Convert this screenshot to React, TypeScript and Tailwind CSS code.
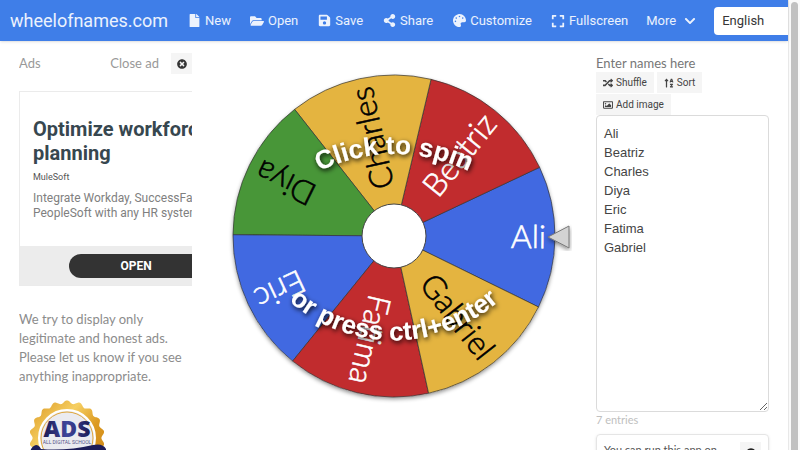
import type { ReactNode } from "react";
import {
  FaChevronDown,
  FaExpand,
  FaFile,
  FaFolderOpen,
  FaPalette,
  FaRandom,
  FaRegImage,
  FaSave,
  FaShareAlt,
  FaSortAlphaUp,
  FaTimesCircle,
} from "react-icons/fa";

const NAMES = ["Ali", "Beatriz", "Charles", "Diya", "Eric", "Fatima", "Gabriel"];

const SLICES = [
  { fill: "#4169e1", text: "#ffffff" },
  { fill: "#c12c2e", text: "#ffffff" },
  { fill: "#e4b440", text: "#000000" },
  { fill: "#489638", text: "#000000" },
  { fill: "#4169e1", text: "#ffffff" },
  { fill: "#c12c2e", text: "#ffffff" },
  { fill: "#e4b440", text: "#000000" },
];

const RADIUS = 161;
const STEP = 360 / NAMES.length;
const TILT = 0.45;

function point(deg: number) {
  const rad = (deg * Math.PI) / 180;
  return `${(RADIUS * Math.cos(rad)).toFixed(2)} ${(RADIUS * Math.sin(rad)).toFixed(2)}`;
}

function Wheel() {
  return (
    <svg viewBox="-202 -195 404 404" className="block w-full cursor-pointer" role="img" aria-label="Wheel of names">
      <defs>
        <filter id="rim" x="-10%" y="-10%" width="120%" height="120%">
          <feDropShadow dx="0" dy="2" stdDeviation="2" floodColor="#000" floodOpacity="0.45" />
        </filter>
        <filter id="glow" x="-10%" y="-40%" width="120%" height="180%">
          <feDropShadow dx="1" dy="2" stdDeviation="2.5" floodColor="#000" floodOpacity="0.95" />
        </filter>
        <path id="arc-top" d="M -120 -32.4 A 170 170 0 0 1 120 -32.4" />
        <path id="arc-bottom" d="M -150 0 A 160 160 0 0 0 150 0" />
      </defs>
      <circle r={RADIUS} fill="#fff" filter="url(#rim)" />
      {NAMES.map((name, i) => {
        const mid = TILT - i * STEP;
        return (
          <g key={name}>
            <path
              d={`M 0 0 L ${point(mid - STEP / 2)} A ${RADIUS} ${RADIUS} 0 0 1 ${point(mid + STEP / 2)} Z`}
              fill={SLICES[i].fill}
              stroke="#333"
              strokeOpacity="0.7"
            />
            <text
              transform={`rotate(${mid})`}
              x="152"
              y="11"
              textAnchor="end"
              fill={SLICES[i].text}
              stroke={SLICES[i].text}
              strokeWidth="0.6"
              className="font-['Lato',sans-serif] text-[32px] font-light"
            >
              {name}
            </text>
          </g>
        );
      })}
      <circle r="32" fill="#fff" stroke="#444" />
      <g fill="#fff" filter="url(#glow)" className="font-['Liberation_Sans',sans-serif] text-[26px] font-bold">
        <text textAnchor="middle">
          <textPath href="#arc-top" startOffset="50%">
            Click to spin
          </textPath>
        </text>
        <text textAnchor="middle">
          <textPath href="#arc-bottom" startOffset="50%">
            or press ctrl+enter
          </textPath>
        </text>
      </g>
      <path d="M 154 1 L 175 -10 L 175 12 Z" fill="#d3d3d3" stroke="#777" filter="url(#rim)" />
    </svg>
  );
}

function NavItem({ icon, label }: { icon: ReactNode; label: string }) {
  return (
    <a href="#" className="flex shrink-0 items-center gap-[3px]">
      <span className="flex w-4 justify-center">{icon}</span>
      {label}
    </a>
  );
}

function Header() {
  return (
    <header className="relative flex h-[41px] items-center gap-[18px] overflow-hidden bg-[#3f7ee8] pl-[10px] font-['Roboto',sans-serif] text-[13px] text-white/90 shadow">
      <a href="#" className="shrink-0 text-[18px]">
        wheelofnames.com
      </a>
      <NavItem icon={<FaFile size={13} />} label="New" />
      <NavItem icon={<FaFolderOpen size={14} />} label="Open" />
      <NavItem icon={<FaSave size={13} />} label="Save" />
      <NavItem icon={<FaShareAlt size={13} />} label="Share" />
      <NavItem icon={<FaPalette size={13} />} label="Customize" />
      <NavItem icon={<FaExpand size={14} />} label="Fullscreen" />
      <button type="button" className="flex shrink-0 items-center gap-2">
        More
        <FaChevronDown size={12} />
      </button>
      <select
        aria-label="Language"
        className="h-7 w-28 shrink-0 appearance-none rounded-sm bg-white px-2 text-[#363636]"
      >
        <option>English</option>
      </select>
    </header>
  );
}

// Scalloped edge of the seal, sampled once per degree.
const SEAL_EDGE = Array.from({ length: 360 }, (_, deg) => {
  const a = (deg * Math.PI) / 180;
  const r = 36 + 1.6 * Math.cos(18 * a + Math.PI);
  return `${(40 + r * Math.cos(a)).toFixed(2)},${(40 + r * Math.sin(a)).toFixed(2)}`;
}).join(" ");

function SchoolBadge() {
  return (
    <svg width="80" height="80" viewBox="0 0 80 80" role="img" aria-label="ADS All Digital School">
      <defs>
        <linearGradient id="gold" x1="0" y1="0" x2="1" y2="1">
          <stop offset="0" stopColor="#d9951f" />
          <stop offset="0.35" stopColor="#f6cf62" />
          <stop offset="0.6" stopColor="#dc9a22" />
          <stop offset="1" stopColor="#c98213" />
        </linearGradient>
        <linearGradient id="navy" x1="0" y1="0" x2="1" y2="0">
          <stop offset="0" stopColor="#1c1c55" />
          <stop offset="0.5" stopColor="#3f459c" />
          <stop offset="1" stopColor="#1c1c55" />
        </linearGradient>
      </defs>
      <polygon points={SEAL_EDGE} fill="url(#gold)" />
      <circle cx="40" cy="40" r="28" fill="#ebebf0" stroke="#fff" strokeWidth="2" />
      <circle cx="40" cy="40" r="26" fill="none" stroke="#e0a63a" />
      <path d="M 3 60 Q 2 49 9 47 Q 12 47 14 51 Q 40 53 66 47 Q 76 45 79 51 L 80 70 L 3 70 Z" fill="#1d1d58" />
      <text
        x="40"
        y="39"
        textAnchor="middle"
        fill="url(#navy)"
        className="font-['Open_Sans',sans-serif] text-[23px] font-extrabold"
      >
        ADS
      </text>
      <text
        x="40"
        y="46"
        textAnchor="middle"
        fill="#55558a"
        className="font-['Roboto',sans-serif] text-[5px] font-normal"
      >
        ALL DIGITAL SCHOOL
      </text>
    </svg>
  );
}

function AdColumn() {
  return (
    <aside className="overflow-hidden pt-3">
      <div className="flex h-[21px] items-center text-[13px] text-[#999]">
        <span className="flex-1">Ads</span>
        <span>Close ad</span>
        <button
          type="button"
          aria-label="Close ad"
          className="ml-3 flex size-[21px] items-center justify-center bg-[#f5f5f5] text-[#363636]"
        >
          <FaTimesCircle size={10} />
        </button>
      </div>
      <div className="mt-[17px] w-[234px] border border-[#ebebeb] font-['Roboto',sans-serif]">
        <div className="h-[154px] pt-[25px] pl-[13px] whitespace-nowrap">
          <h2 className="text-[20px] leading-6 font-bold text-[#37474f]">
            Optimize workforce
            <br />
            planning
          </h2>
          <p className="mt-1 text-[9px] leading-4 text-[#555]">MuleSoft</p>
          <p className="mt-[6px] text-[12px] leading-[15px] text-[#808080]">
            Integrate Workday, SuccessFactors,
            <br />
            PeopleSoft with any HR system
          </p>
        </div>
        <div className="flex h-[39px] items-center justify-center bg-[#ececec]">
          <a
            href="#"
            className="flex h-6 w-[134px] items-center justify-center rounded-full bg-[#333] text-[12px] font-bold text-white"
          >
            OPEN
          </a>
        </div>
      </div>
      <p className="mt-6 text-[13px] leading-[19px] text-[#8c8c8c]">
        We try to display only legitimate and honest ads. Please let us know if you see anything inappropriate.
      </p>
      <div className="mt-3 pl-2">
        <SchoolBadge />
      </div>
    </aside>
  );
}

function ToolButton({ icon, label }: { icon: ReactNode; label: string }) {
  return (
    <button
      type="button"
      className="flex h-[21px] items-center gap-[3px] bg-[#f5f5f5] px-[7px] font-['Roboto',sans-serif] text-[10px] text-[#444]"
    >
      {icon}
      {label}
    </button>
  );
}

function NamesColumn() {
  return (
    <aside className="pt-3">
      <label htmlFor="names" className="block h-[19px] text-[13px] leading-[21px] text-[#777]">
        Enter names here
      </label>
      <div className="flex flex-wrap gap-x-[3px] gap-y-px">
        <ToolButton icon={<FaRandom size={10} />} label="Shuffle" />
        <ToolButton icon={<FaSortAlphaUp size={10} />} label="Sort" />
        <ToolButton icon={<FaRegImage size={10} />} label="Add image" />
      </div>
      <textarea
        id="names"
        defaultValue={NAMES.join("\n")}
        className="block h-[297px] w-full resize rounded border border-[#dbdbdb] px-[7px] py-2 font-['Liberation_Sans',sans-serif] text-[13px] leading-[19px] text-[#444]"
      />
      <p className="text-[11px] leading-4 text-[#c0c0c0]">{NAMES.length} entries</p>
      <div className="mt-[6px] flex justify-between rounded-sm border border-[#e5e5e5] p-[7px] shadow-sm">
        <p className="text-[11px] leading-4 text-[#555]">You can run this app on your phone</p>
        <button
          type="button"
          aria-label="Dismiss"
          className="flex size-[21px] shrink-0 items-center justify-center bg-[#f5f5f5] text-[#222]"
        >
          <FaTimesCircle size={10} />
        </button>
      </div>
    </aside>
  );
}

export default function App() {
  return (
    <div className="flex h-screen overflow-hidden bg-white font-['Lato',sans-serif]">
      <div className="min-w-0 flex-1">
        <Header />
        <main className="grid grid-cols-[173px_1fr_173px] px-[19px]">
          <AdColumn />
          <Wheel />
          <NamesColumn />
        </main>
      </div>
      <div className="w-3 border-l border-[#e8e8e8] bg-[#fafafa] px-[2px] pt-[2px]">
        <div className="h-full rounded-t-full bg-[#c1c1c1]" />
      </div>
    </div>
  );
}
